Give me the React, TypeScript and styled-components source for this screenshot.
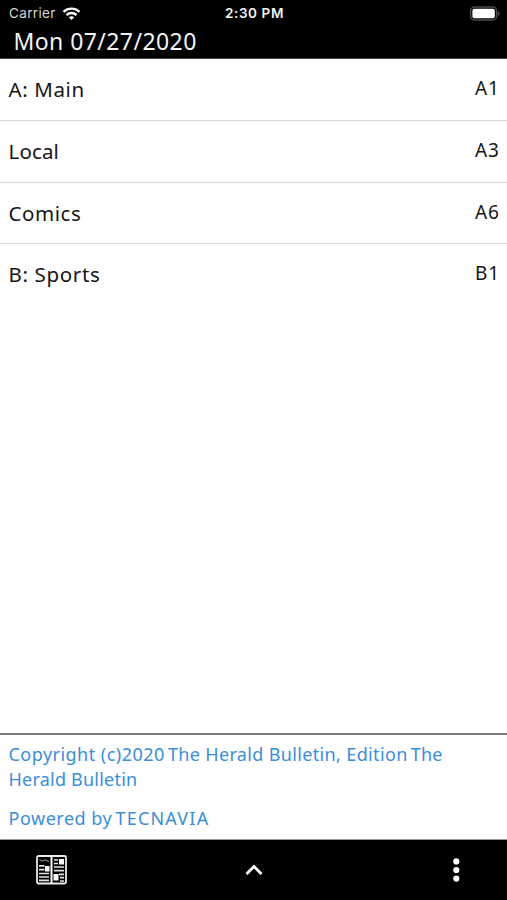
import React from "react";
import styled, { createGlobalStyle } from "styled-components";

const Global = createGlobalStyle`
  html, body, #root { height: 100%; margin: 0; }
  * { box-sizing: border-box; }
  body { background: #fff; overflow: hidden; }
`;

const Screen = styled.div`
  display: flex;
  flex-direction: column;
  width: 507px;
  height: 900px;
  background: #fff;
  font-family: "Noto Sans", sans-serif;
  color: #151515;
`;

const Header = styled.header`
  height: 59px;
  flex: none;
  background: #000;
  color: #f4f4f4;
  border-bottom: 1px solid #444;
`;

const StatusBar = styled.div`
  display: grid;
  grid-template-columns: 1fr auto 1fr;
  align-items: center;
  height: 27px;
  padding: 0 7px 0 9px;
  font-family: Inter, sans-serif;
  font-size: 13.5px;
  line-height: 27px;
`;

const Carrier = styled.div`
  display: flex;
  align-items: center;
  gap: 6px;
  color: #d4d4d4;
  letter-spacing: 0.35px;
`;

const Clock = styled.div`
  font-weight: 600;
  letter-spacing: 0.6px;
`;

const BatterySlot = styled.div`
  display: flex;
  justify-content: flex-end;
`;

const DateTitle = styled.h1`
  margin: 0;
  padding-left: 13.5px;
  font-size: 23px;
  font-weight: 400;
  line-height: 29px;
  letter-spacing: 0.42px;
`;

const Sections = styled.main`
  flex: 1;
`;

const Row = styled.div<{ $last?: boolean }>`
  display: flex;
  justify-content: space-between;
  height: 61.8px;
  padding: 0 7px 0 8.5px;
  border-bottom: ${(p) => (p.$last ? "none" : "1px solid #d6d6d6")};
`;

const SectionName = styled.span<{ $spacing: number }>`
  font-size: 20.5px;
  line-height: 60px;
  letter-spacing: ${(p) => p.$spacing}px;
`;

const PageLabel = styled.span`
  width: 25px;
  font-size: 19px;
  line-height: 59px;
  letter-spacing: 0.8px;
`;

const Footer = styled.footer`
  flex: none;
  height: 107px;
  padding: 7px 8.5px 0;
  border-top: 2px solid #777;
  border-bottom: 1px solid #999;
  color: #3b8ed8;
  font-size: 18px;
  line-height: 25px;
`;

const Line = styled.div<{ $gap?: number }>`
  display: flex;
  margin-top: ${(p) => p.$gap ?? 0}px;
  white-space: pre;
`;

const Phrase = styled.span<{ $spacing: number; $tight?: boolean }>`
  letter-spacing: ${(p) => p.$spacing}px;
  margin-left: ${(p) => (p.$tight ? -2 : 0)}px;
`;

const Toolbar = styled.nav`
  flex: none;
  display: flex;
  justify-content: space-between;
  align-items: center;
  height: 60px;
  padding: 0 36px;
  background: #000;
`;

const ToolButton = styled.button<{ $align: string }>`
  display: flex;
  justify-content: ${(p) => p.$align};
  width: 60px;
  padding: 0;
  border: 0;
  background: none;
`;

const Wifi = () => (
  <svg width="19" height="14" viewBox="0 0 18 14" fill="none" stroke="#fff" strokeWidth="2.4">
    <path d="M1 4.8C5.6.6 12.4.6 17 4.8" />
    <path d="M4 8C6.8 5.4 11.2 5.4 14 8" />
    <path d="M6.3 10.3C7.8 9 10.2 9 11.7 10.3L9 13Z" fill="#fff" stroke="none" />
  </svg>
);

const Battery = () => (
  <svg width="31" height="15" viewBox="0 0 31 15">
    <rect x="1.6" y="1" width="26" height="13" rx="4" fill="none" stroke="#4c4c4c" strokeWidth="1.5" />
    <rect x="3.4" y="2.8" width="22.4" height="9.4" rx="2" fill="#fff" />
    <path d="M28.8 5.2C31 6 31 9 28.8 9.8Z" fill="#555" />
  </svg>
);

const Newspaper = () => (
  <svg width="31" height="30" viewBox="0 0 31 30">
    <rect x="1" y="1" width="29" height="27.5" rx="1.5" fill="#000" stroke="#e8e8e8" strokeWidth="1.8" />
    <path d="M15.5 1V29" stroke="#fff" strokeWidth="2" />
    <path d="M3.5 4.8L6 6L9 5L13 6.6" fill="none" stroke="#777" strokeWidth="1.2" />
    <path
      d="M3 10.8H8.5M3 14.6H8.5M3 18.5H13M3 22H13M3 25.4H13M18 5H22M18 8.5H22M18 12H28M18 15.7H28M23 19.3H28M24 22.7H28M24 26H28"
      stroke="#e2e2e2"
      strokeWidth="1.7"
    />
    <path d="M9 11H13.5V16.5H9ZM23 4H28V9.5H23ZM17.5 19H22.5V25.5H17.5Z" fill="#fff" />
  </svg>
);

const sections = [
  { name: "A: Main", page: "A1", spacing: 0.6 },
  { name: "Local", page: "A3", spacing: 0.15 },
  { name: "Comics", page: "A6", spacing: 0.55 },
  { name: "B: Sports", page: "B1", spacing: 0.65 },
];

export default function App() {
  return (
    <>
      <Global />
      <Screen>
        <Header>
          <StatusBar>
            <Carrier>Carrier <Wifi /></Carrier>
            <Clock>2:30 PM</Clock>
            <BatterySlot><Battery /></BatterySlot>
          </StatusBar>
          <DateTitle>Mon 07/27/2020</DateTitle>
        </Header>
        <Sections>
          {sections.map((s, i) => (
            <Row key={s.name} $last={i === sections.length - 1}>
              <SectionName $spacing={s.spacing}>{s.name}</SectionName>
              <PageLabel>{s.page}</PageLabel>
            </Row>
          ))}
        </Sections>
        <Footer>
          <Line>
            <Phrase $spacing={0.47}>Copyright (c)2020 </Phrase>
            <Phrase $spacing={0.35} $tight>The Herald Bulletin, Edition </Phrase>
            <Phrase $spacing={0.3} $tight>The</Phrase>
          </Line>
          <Line>
            <Phrase $spacing={0.22}>Herald Bulletin</Phrase>
          </Line>
          <Line $gap={14}>
            <Phrase $spacing={0.52}>Powered by </Phrase>
            <Phrase $spacing={1.2} $tight>TECNAVIA</Phrase>
          </Line>
        </Footer>
        <Toolbar>
          <ToolButton $align="flex-start" aria-label="Pages"><Newspaper /></ToolButton>
          <ToolButton $align="center" aria-label="Expand">
            <svg width="18" height="12" viewBox="0 0 18 12" fill="none" stroke="#fff" strokeWidth="2.8">
              <path d="M1.5 10L9 2.5L16.5 10" />
            </svg>
          </ToolButton>
          <ToolButton $align="flex-end" aria-label="More">
            <svg width="30" height="24" viewBox="0 0 30 24" fill="#fff">
              <circle cx="15.3" cy="3.4" r="3.1" />
              <circle cx="15.3" cy="12" r="3.1" />
              <circle cx="15.3" cy="20.6" r="3.1" />
            </svg>
          </ToolButton>
        </Toolbar>
      </Screen>
    </>
  );
}
